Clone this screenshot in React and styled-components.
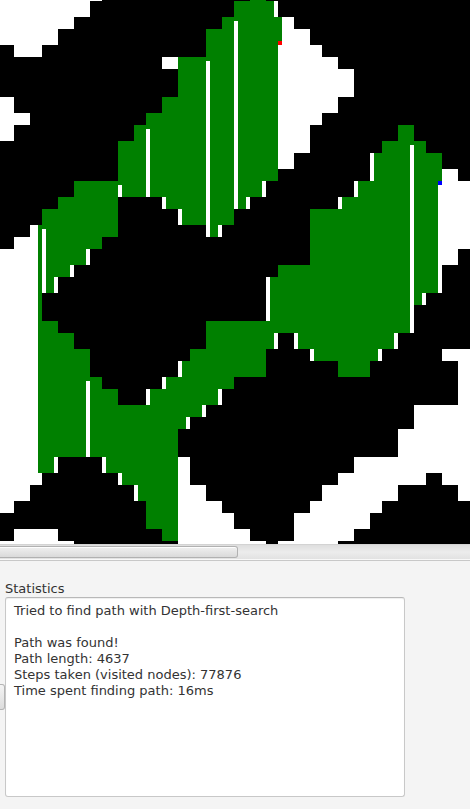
import React from "react";
import styled, { createGlobalStyle } from "styled-components";

const GlobalStyle = createGlobalStyle`
  * { box-sizing: border-box; }
  body {
    margin: 0;
    background: #f4f4f4;
    color: #333333;
    font-family: "DejaVu Sans", sans-serif;
    font-size: 13px;
    line-height: 16px;
  }
`;

const Page = styled.main`
  display: flex;
  flex-direction: column;
  min-height: 100vh;
  overflow: hidden;
`;

const MapPane = styled.section`
  overflow: hidden;
  background: #000000;
  line-height: 0;
`;

const MapCanvas = styled.svg`
  display: block;
`;

const ScrollTrack = styled.div`
  display: flex;
  height: 16px;
  padding: 1px 0;
  border-top: 1px solid #d3d3d3;
  border-bottom: 1px solid #f8f8f8;
  background: linear-gradient(#dedede, #ececec 50%, #e2e2e2);
`;

const ScrollThumb = styled.button`
  width: 238px;
  padding: 0;
  border: 1px solid #b1b1b1;
  border-left: 0;
  border-radius: 0 3px 3px 0;
  background: linear-gradient(#f0f0f0, #dadada);
  box-shadow: inset 0 1px 0 #fdfdfd;
`;

const LowerPane = styled.section`
  display: flex;
  flex: 1;
  border-top: 1px solid #c8c8c8;
`;

const Side = styled.div`
  display: flex;
  width: 5px;
  padding-top: 123px;
`;

const SideButton = styled.button`
  width: 5px;
  height: 26px;
  padding: 0;
  border: 1px solid #b4b4b4;
  border-left: 0;
  border-radius: 0 3px 3px 0;
  background: linear-gradient(#f4f4f4, #dcdcdc);
`;

const Statistics = styled.div`
  display: flex;
  flex: 1;
  flex-direction: column;
  max-width: 400px;
  padding-top: 20px;
`;

const Label = styled.label`
  height: 16px;
`;

const Output = styled.textarea`
  display: block;
  width: 100%;
  height: 200px;
  padding: 5px 8px;
  border: 1px solid #c8c8c8;
  border-top-color: #b8b8b8;
  border-radius: 3px;
  outline: 0;
  background: #ffffff;
  box-shadow: inset 0 1px 1px #eeeeee;
  color: inherit;
  font: inherit;
  resize: none;
`;

// Each band: top, bottom, then [left, right] spans.
const VISITED = [
  [0, 1, [250, 266]],
  [1, 17, [234, 274]],
  [17, 29, [222, 282]],
  [29, 41, [206, 282]],
  [41, 57, [206, 278]],
  [57, 97, [178, 278]],
  [97, 113, [162, 278]],
  [113, 125, [146, 278]],
  [125, 141, [134, 278], [398, 414]],
  [141, 153, [118, 278], [382, 426]],
  [153, 181, [118, 278], [374, 442]],
  [181, 197, [74, 262], [358, 438]],
  [197, 209, [58, 118], [166, 246], [342, 438]],
  [209, 225, [42, 118], [182, 234], [310, 438]],
  [225, 237, [38, 118], [210, 218], [310, 438]],
  [237, 249, [38, 102], [310, 438]],
  [249, 265, [38, 86], [310, 438]],
  [265, 277, [38, 70], [278, 438]],
  [277, 293, [38, 54], [270, 438]],
  [293, 305, [38, 42], [270, 422]],
  [305, 321, [38, 42], [270, 410]],
  [321, 333, [38, 58], [206, 410]],
  [333, 349, [38, 74], [206, 274], [298, 394]],
  [349, 361, [38, 90], [190, 266], [314, 378]],
  [361, 377, [38, 90], [182, 266], [338, 370]],
  [377, 389, [38, 102], [166, 234]],
  [389, 405, [38, 118], [150, 218]],
  [405, 417, [38, 202]],
  [417, 429, [38, 186]],
  [429, 457, [38, 178]],
  [457, 473, [38, 54], [106, 178]],
  [473, 485, [122, 178]],
  [485, 501, [138, 178]],
  [501, 529, [146, 178]],
  [529, 541, [162, 178]],
];

const OPEN = [
  [0, 1, [0, 102]],
  [1, 17, [0, 90], [274, 278]],
  [17, 29, [0, 74], [282, 294]],
  [29, 41, [0, 58], [282, 310]],
  [41, 45, [0, 58], [282, 310]],
  [45, 57, [14, 42], [278, 322]],
  [57, 69, [162, 178], [278, 338]],
  [69, 97, [278, 354]],
  [97, 113, [0, 14], [278, 338]],
  [113, 125, [0, 30], [278, 322]],
  [125, 141, [0, 14], [278, 310]],
  [141, 153, [278, 310]],
  [153, 169, [278, 294], [370, 374]],
  [169, 181, [370, 374], [442, 458]],
  [181, 185, [442, 470]],
  [185, 249, [438, 470]],
  [181, 197, [262, 266], [354, 358]],
  [185, 197, [118, 122]],
  [197, 209, [162, 166], [246, 250], [338, 342]],
  [209, 225, [178, 182]],
  [225, 237, [30, 38], [218, 222]],
  [237, 249, [14, 38]],
  [249, 265, [0, 38], [86, 90], [438, 458]],
  [265, 277, [0, 38], [70, 74], [438, 442]],
  [277, 293, [0, 38], [54, 58], [438, 442]],
  [277, 321, [266, 270]],
  [293, 473, [0, 38]],
  [293, 305, [422, 426]],
  [333, 349, [274, 278], [294, 298], [394, 398]],
  [349, 361, [310, 314], [378, 382], [442, 470]],
  [361, 377, [178, 182], [458, 470]],
  [377, 389, [162, 166], [458, 470]],
  [389, 405, [146, 150], [218, 222], [458, 470]],
  [405, 417, [202, 206], [414, 470]],
  [417, 429, [186, 190], [414, 470]],
  [429, 457, [398, 470]],
  [457, 473, [54, 58], [102, 106], [178, 190], [354, 470]],
  [473, 485, [0, 42], [118, 122], [178, 190], [338, 426], [442, 470]],
  [485, 501, [0, 30], [134, 138], [178, 206], [322, 398], [458, 470]],
  [501, 513, [0, 14], [178, 222], [310, 382]],
  [513, 529, [178, 234], [294, 370]],
  [529, 541, [14, 58], [178, 250], [294, 354]],
  [541, 544, [0, 74], [178, 266], [278, 338]],
  // unvisited columns inside the searched area
  [21, 209, [234, 238]],
  [61, 237, [206, 210]],
  [129, 197, [146, 150]],
  [145, 333, [410, 414]],
  [229, 293, [42, 46]],
  [381, 457, [86, 90]],
];

const toPath = (bands) =>
  bands
    .flatMap(([top, bottom, ...spans]) =>
      spans.map(([left, right]) => `M${left} ${top}H${right}V${bottom}H${left}Z`)
    )
    .join("");

const RESULT = `Tried to find path with Depth-first-search

Path was found!
Path length: 4637
Steps taken (visited nodes): 77876
Time spent finding path: 16ms`;

export default function App() {
  return (
    <>
      <GlobalStyle />
      <Page>
        <MapPane>
          <MapCanvas
            width="470"
            height="544"
            viewBox="0 0 470 544"
            shapeRendering="crispEdges"
            role="img"
            aria-label="Grid map with visited nodes"
          >
            <path fill="#008000" d={toPath(VISITED)} />
            <path fill="#ffffff" d={toPath(OPEN)} />
            <rect x="278" y="41" width="4" height="4" fill="#ff0000" />
            <rect x="438" y="181" width="4" height="4" fill="#0000ff" />
          </MapCanvas>
        </MapPane>
        <ScrollTrack>
          <ScrollThumb type="button" aria-label="Scroll map horizontally" />
        </ScrollTrack>
        <LowerPane>
          <Side>
            <SideButton type="button" aria-label="Run search" />
          </Side>
          <Statistics>
            <Label htmlFor="statistics">Statistics</Label>
            <Output id="statistics" readOnly spellCheck={false} value={RESULT} />
          </Statistics>
        </LowerPane>
      </Page>
    </>
  );
}
